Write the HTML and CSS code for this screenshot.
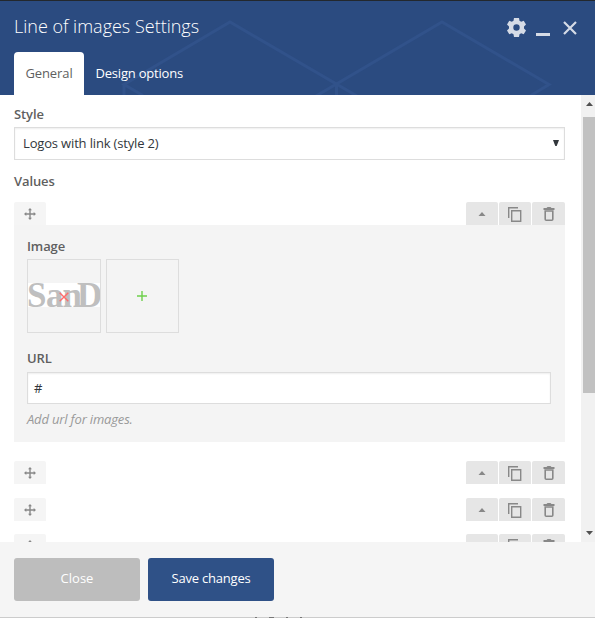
FILE: index.html
```html
<!DOCTYPE html>
<html lang="en">
<head>
<meta charset="utf-8">
<title>Line of images Settings</title>
<link rel="stylesheet" href="styles.css">
</head>
<body>
<svg class="defs" width="0" height="0" aria-hidden="true">
  <symbol id="move" viewBox="0 0 12 12"><path d="M6 1v10M1 6h10" fill="none" stroke="currentColor" stroke-width="1.400"/><path d="M6 0l2 2.300H4zM6 12l2-2.300H4zM0 6l2.300-2v4zM12 6L9.700 4v4z" fill="currentColor"/></symbol>
  <symbol id="up" viewBox="0 0 8 4"><path d="M4 0l3.500 4h-7z" fill="currentColor"/></symbol>
  <symbol id="copy" viewBox="0 0 14 15"><path d="M.7 11V.7H10M3.700 3.700h9v10.500h-9z" fill="none" stroke="currentColor" stroke-width="1.400"/></symbol>
  <symbol id="trash" viewBox="0 0 12 14"><path d="M.5 1H3.500l1-1h3l1 1h3v2H.5z" fill="currentColor"/><path d="M2.200 4v8.200q0 1 1 1h5.600q1 0 1-1V4z" fill="none" stroke="currentColor" stroke-width="1.600"/></symbol>
</svg>
<div class="dialog">
  <header class="header">
    <svg class="pattern" width="595" height="95" viewBox="0 0 595 95" aria-hidden="true"><path d="M143 95.500L124 84.500 230 22 357 96M124 84v12M316 96L442 22 549 84.500 530 96M336.500 84v12"/></svg>
    <div class="titlebar">
      <h1 class="title">Line of images Settings</h1>
      <div class="window-tools">
        <svg width="19" height="19" viewBox="0 0 19 19"><path fill="currentColor" fill-rule="evenodd" d="M7 0h5l.5 2.700 1.700 1 2.500-1L19 6.500l-2 2v2l2 2-2.300 3.800-2.500-1-1.700 1L12 19H7l-.5-2.700-1.700-1-2.500 1L0 12.500l2-2v-2l-2-2 2.300-3.800 2.500 1 1.700-1zM9.500 6.300a3.200 3.200 0 1 0 0 6.400 3.200 3.200 0 0 0 0-6.400z"/></svg>
        <span class="minimize"></span>
        <svg width="14" height="14" viewBox="0 0 14 14"><path d="M1 1l12 12M13 1L1 13" fill="none" stroke="currentColor" stroke-width="2.200"/></svg>
      </div>
    </div>
    <nav class="tabs"><a class="tab active">General</a><a class="tab">Design options</a></nav>
  </header>
  <div class="body">
    <main class="content">
      <div class="label">Style</div>
      <div class="field select"><span>Logos with link (style 2)</span><svg width="6" height="6" viewBox="0 0 6 6"><path d="M0 0h6L3.700 6H2.300z" fill="#32373c"/></svg></div>
      <div class="label values">Values</div>
      <div class="controls">
        <span class="drag"><svg><use href="#move"/></svg></span>
        <span class="btn"><svg class="i-up"><use href="#up"/></svg></span><span class="btn"><svg class="i-copy"><use href="#copy"/></svg></span><span class="btn last"><svg class="i-trash"><use href="#trash"/></svg></span>
      </div>
      <section class="panel">
        <div class="label">Image</div>
        <div class="images">
          <div class="thumb"><svg class="logo" width="72" height="24" viewBox="0 0 72 24"><rect width="72" height="24" fill="#fff"/><text x="-1 18 34.500 49" y="23.500">SanD</text></svg><svg class="remove" width="10" height="10" viewBox="0 0 10 10"><path d="M.7.7l8.600 8.600M9.300.7L.7 9.300"/></svg></div>
          <div class="thumb add"><svg width="10" height="10" viewBox="0 0 10 10"><path d="M5 0v10M0 5h10"/></svg></div>
        </div>
        <div class="label url">URL</div>
        <div class="field">#</div>
        <p class="hint">Add url for images.</p>
      </section>
      <div class="controls second">
        <span class="drag"><svg><use href="#move"/></svg></span>
        <span class="btn"><svg class="i-up"><use href="#up"/></svg></span><span class="btn"><svg class="i-copy"><use href="#copy"/></svg></span><span class="btn last"><svg class="i-trash"><use href="#trash"/></svg></span>
      </div>
      <div class="controls third">
        <span class="drag"><svg><use href="#move"/></svg></span>
        <span class="btn"><svg class="i-up"><use href="#up"/></svg></span><span class="btn"><svg class="i-copy"><use href="#copy"/></svg></span><span class="btn last"><svg class="i-trash"><use href="#trash"/></svg></span>
      </div>
      <div class="controls fourth">
        <span class="drag"><svg><use href="#move"/></svg></span>
        <span class="btn"><svg class="i-up"><use href="#up"/></svg></span><span class="btn"><svg class="i-copy"><use href="#copy"/></svg></span><span class="btn last"><svg class="i-trash"><use href="#trash"/></svg></span>
      </div>
    </main>
    <div class="scrollbar"><svg width="7" height="4" viewBox="0 0 7 4"><path d="M3.500 0L7 4H0z"/></svg><div class="thumb-bar"></div><svg width="7" height="4" viewBox="0 0 7 4"><path d="M0 0h7L3.500 4z"/></svg></div>
  </div>
  <footer class="footer"><span class="button">Close</span><span class="button primary">Save changes</span></footer>
  <div class="edge"><i></i><i class="wide"></i><i></i><i></i></div>
</div>
</body>
</html>
```
FILE: styles.css
```css
* { box-sizing: border-box; }
body { margin: 0; font: 13px/18px "Open Sans", sans-serif; color: #32373c; background: #fff; overflow: hidden; }
svg { display: block; flex: none; }
.defs { position: absolute; }
.dialog { display: flex; flex-direction: column; width: 595px; height: 618px; }
.header { position: relative; flex: none; height: 95px; padding: 0 14px; background: #2b4b80; border-top: 1px solid #23282d; display: flex; flex-direction: column; justify-content: space-between; }
.pattern { position: absolute; left: 0; top: -1px; fill: none; stroke: #31528a; stroke-width: 3; }
.titlebar, .tabs { position: relative; display: flex; }
.titlebar { height: 51px; justify-content: space-between; }
.title { margin: 12px 0 0; font-size: 18px; line-height: 27px; font-weight: 300; color: #fff; }
.window-tools { display: flex; width: 71px; height: 19px; margin: 17px 3px 0 auto; color: #d5dbe6; }
.window-tools svg:last-child { margin: 3px 0 0 13px; }
.minimize { width: 14px; height: 3px; margin: 15px 0 0 10px; background: currentColor; }
.tab { height: 43px; line-height: 43px; padding: 0 11.500px; color: #fff; letter-spacing: -.2px; }
.tab.active { width: 70px; text-align: center; padding: 0; letter-spacing: -.1px; color: #5f5f5f; background: #fff; border-radius: 4px 4px 0 0; }
.body { flex: none; display: flex; height: 447px; }
.content { flex: 1; padding: 10px 16px 0 14px; overflow: hidden; }
.label { font-weight: 600; color: #5f5f5f; height: 18px; letter-spacing: -.1px; }
.field { height: 32px; display: flex; align-items: center; padding: 0 6px; background: #fff; border: 1px solid #ddd; box-shadow: inset 0 1px 2px rgba(0,0,0,.07); }
.select { height: 33px; margin-top: 4px; padding: 0 5px 2px 8px; justify-content: space-between; letter-spacing: -.16px; }
.values { margin-top: 12px; }
.controls { display: flex; gap: 1px; height: 23px; margin-top: 12px; }
.drag, .btn { display: flex; align-items: center; justify-content: center; width: 32px; color: #888; border-radius: 2px 2px 0 0; }
.drag { background: #f5f5f5; margin-right: auto; }
.drag svg { width: 12px; height: 12px; margin-top: 1px; }
.btn { background: #e6e6e6; }
.btn.last { width: 33px; }
.i-up { width: 8px; height: 4px; margin-top: 1px; }
.i-copy { width: 14px; height: 15px; margin-top: 1px; }
.i-trash { width: 12px; height: 14px; }
.panel { height: 217px; padding: 12px 14px 0 13px; background: #f4f4f4; }
.images { display: flex; gap: 5px; margin-top: 4px; }
.thumb { position: relative; width: 74px; height: 74px; border: 1px solid #ddd; display: flex; align-items: center; justify-content: center; }
.add { width: 73px; }
.add svg { margin-right: 1px; }
.logo { margin-bottom: 2px; }
.logo text { font: bold 35px "Liberation Serif", serif; fill: #bfbfbf; }
.remove { position: absolute; left: 31px; top: 32px; }
.remove path { stroke: #ff6b6b; stroke-width: 1.400; }
.add path { stroke: #6dcf4b; stroke-width: 1.400; }
.url { margin-top: 16px; }
.panel .field { margin-top: 5px; }
.hint { margin: 6px 0 0; font-style: italic; color: #999; letter-spacing: -.17px; }
.second { margin-top: 19px; }
.third { margin-top: 14px; }
.fourth { margin-top: 13px; }
.scrollbar { flex: none; width: 14px; padding: 7px 0 7px 2px; background: #f1f1f1; display: flex; flex-direction: column; }
.scrollbar svg { margin-left: 3px; fill: #505050; }
.thumb-bar { height: 276px; margin: 11px 0 auto; background: #c1c1c1; }
.footer { flex: none; display: flex; gap: 8px; height: 75px; padding: 16px 14px; background: #f5f5f5; }
.button { width: 126px; height: 43px; line-height: 41px; text-align: center; color: #fff; background: #bdbdbd; border-radius: 3px; }
.primary { background: #2f5187; letter-spacing: -.2px; }
.edge { height: 1px; background: #ccc; display: flex; gap: 12px; padding-left: 255px; }
.edge i { width: 2px; height: 1px; background: #777; }
.edge .wide { width: 5px; }
```
